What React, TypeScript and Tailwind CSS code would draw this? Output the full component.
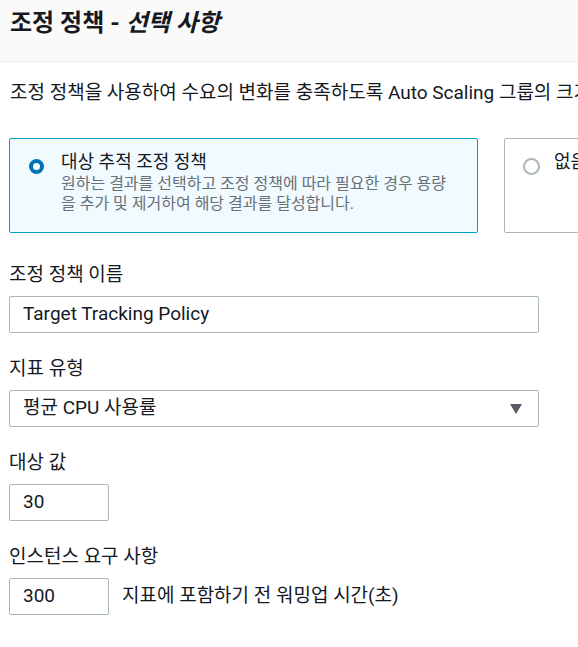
import React from "react";

const font = {
  fontFamily: 'Roboto, "Noto Sans CJK KR", sans-serif',
};

function Field({ label, children }: { label: string; children: React.ReactNode }) {
  return (
    <div className="flex flex-col">
      <label className="text-[19px] leading-[26px] text-[#16191f] pt-[2px] mb-[8px]">{label}</label>
      {children}
    </div>
  );
}

function TextBox({ value, width }: { value: string; width: string }) {
  return (
    <div className={`${width} h-[37px] border border-[#aab7b8] rounded-[2px] bg-white flex items-center px-[13px] text-[19px] text-[#16191f]`}>
      {value}
    </div>
  );
}

export default function App() {
  return (
    <div className="w-[578px] h-[647px] overflow-hidden bg-white" style={font}>
      {/* Header */}
      <div className="h-[62px] bg-[#fafafa] border-b border-[#eaeded] px-[10px] pt-[7px]">
        <h2 className="text-[24px] font-bold text-[#16191f] leading-[32px]">
          조정 정책 - <i>선택 사항</i>
        </h2>
      </div>

      <div className="px-[9px]">
        <p className="mt-[18px] text-[19px] leading-[26px] text-[#16191f] whitespace-nowrap pl-[1px]">
          조정 정책을 사용하여 수요의 변화를 충족하도록 Auto Scaling 그룹의 크기를 조정합니다.
        </p>

        {/* Radio cards */}
        <div className="mt-[32px] flex gap-[26px] whitespace-nowrap">
          <div className="w-[469px] h-[95px] shrink-0 border border-[#00a1c9] bg-[#f1faff] rounded-[2px] flex pl-[19px] pt-[11px]">
            <span className="w-[15px] h-[15px] mt-[9px] rounded-full border-[4px] border-[#0073bb] bg-white shrink-0" />
            <div className="ml-[17px]">
              <div className="text-[18px] leading-[24px] text-[#16191f]">대상 추적 조정 정책</div>
              <div className="text-[16px] leading-[20px] text-[#687078]">
                원하는 결과를 선택하고 조정 정책에 따라 필요한 경우 용량
                <br />을 추가 및 제거하여 해당 결과를 달성합니다.
              </div>
            </div>
          </div>
          <div className="w-[300px] h-[95px] shrink-0 border border-[#aab7b8] bg-white rounded-[2px] flex pl-[18px] pt-[11px]">
            <span className="w-[17px] h-[17px] mt-[8px] rounded-full border-2 border-[#aab7b8] bg-white shrink-0" />
            <div className="ml-[14px] text-[18px] leading-[24px] text-[#16191f]">없음</div>
          </div>
        </div>

        <div className="mt-[27px] flex flex-col gap-[21px]">
          <Field label="조정 정책 이름">
            <TextBox value="Target Tracking Policy" width="w-[530px]" />
          </Field>
          <Field label="지표 유형">
            <div className="w-[530px] h-[37px] border border-[#aab7b8] rounded-[2px] bg-white flex items-center justify-between pl-[13px] pr-[16px] text-[19px] text-[#16191f]">
              <span>평균 CPU 사용률</span>
              <svg width="12" height="10" viewBox="0 0 12 10">
                <polygon points="0,0 12,0 6,10" fill="#545b64" />
              </svg>
            </div>
          </Field>
          <Field label="대상 값">
            <TextBox value="30" width="w-[100px]" />
          </Field>
          <Field label="인스턴스 요구 사항">
            <div className="flex items-center">
              <TextBox value="300" width="w-[100px]" />
              <span className="ml-[13px] text-[19px] text-[#16191f]">지표에 포함하기 전 워밍업 시간(초)</span>
            </div>
          </Field>
        </div>
      </div>
    </div>
  );
}
